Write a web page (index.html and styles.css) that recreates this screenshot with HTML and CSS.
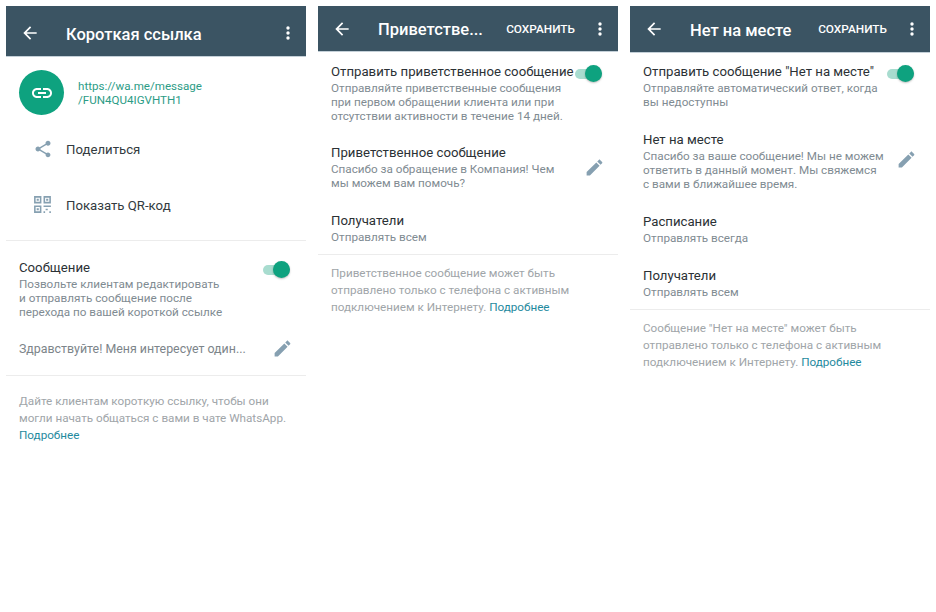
FILE: index.html
```html
<!DOCTYPE html>
<html lang="ru">

<head>
    <meta charset="UTF-8">
    <meta name="viewport" content="width=device-width, initial-scale=1.0">
    <title>Настройки</title>
    <link rel="stylesheet" href="styles.css">
</head>

<body>
    <div class="screens">
        <!-- короткая ссылка -->
        <section class="screen">
            <header class="bar bar-tall">
                <svg class="back" viewBox="0 0 24 24"><path d="M20 11H7.83l5.59-5.59L12 4l-8 8 8 8 1.41-1.41L7.83 13H20v-2z"/></svg>
                <h1 class="bar-title">Короткая ссылка</h1>
                <svg class="more" viewBox="0 0 4 14"><circle cx="2" cy="2" r="1.7"/><circle cx="2" cy="7" r="1.7"/><circle cx="2" cy="12" r="1.7"/></svg>
            </header>
            <div class="link-row">
                <div class="link-circle">
                    <svg viewBox="0 0 24 24"><path d="M3.9 12c0-1.71 1.39-3.1 3.1-3.1h4V7H7c-2.76 0-5 2.24-5 5s2.24 5 5 5h4v-1.9H7c-1.71 0-3.1-1.39-3.1-3.1zM8 13h8v-2H8v2zm9-6h-4v1.9h4c1.71 0 3.1 1.39 3.1 3.1s-1.39 3.1-3.1 3.1h-4V17h4c2.76 0 5-2.24 5-5s-2.24-5-5-5z"/></svg>
                </div>
                <div class="link-text">https://wa.me/message<br>/FUN4QU4IGVHTH1</div>
            </div>
            <div class="action">
                <svg class="action-icon" viewBox="0 0 24 24"><path d="M18 16.08c-.76 0-1.44.3-1.96.77L8.91 12.7c.05-.23.09-.46.09-.7s-.04-.47-.09-.7l7.05-4.11c.54.5 1.25.81 2.04.81 1.66 0 3-1.34 3-3s-1.34-3-3-3-3 1.34-3 3c0 .24.04.47.09.7L8.04 9.81C7.5 9.31 6.79 9 6 9c-1.66 0-3 1.34-3 3s1.34 3 3 3c.79 0 1.5-.31 2.04-.81l7.12 4.16c-.05.21-.08.43-.08.65 0 1.61 1.31 2.92 2.92 2.92 1.61 0 2.92-1.31 2.92-2.92s-1.31-2.92-2.92-2.92z"/></svg>
                <span>Поделиться</span>
            </div>
            <div class="action">
                <svg class="action-icon" viewBox="0 0 19 19"><path fill-rule="evenodd" d="M1 1h7v7H1zM2.500 2.500v4h4v-4zM10 1h7v7h-7zM11.500 2.500v4h4v-4zM1 10h7v7H1zM2.500 11.500v4h4v-4z"/><path d="M3.500 3.500h2v2h-2zM12.500 3.500h2v2h-2zM3.500 12.500h2v2h-2zM10 10h7v1.500h-7zM12 13h2v1.500h-2zM10 15.500h1.500V17H10zM15.500 15.500H17V17h-1.500z"/></svg>
                <span>Показать QR-код</span>
            </div>
            <div class="divider divider-links"></div>
            <div class="row row-message">
                <div class="row-body">
                    <div class="label">Сообщение</div>
                    <div class="sub">Позвольте клиентам редактировать<br>и отправлять сообщение после<br>перехода по вашей короткой ссылке</div>
                </div>
                <div class="toggle"><span class="knob"></span></div>
            </div>
            <div class="row row-draft">
                <div class="draft">Здравствуйте! Меня интересует один...</div>
                <svg class="pencil" viewBox="0 0 24 24"><path d="M3 17.25V21h3.75L17.81 9.94l-3.75-3.75L3 17.25zM20.710 7.040c.39-.39.39-1.020 0-1.410l-2.340-2.340c-.39-.39-1.020-.39-1.410 0l-1.830 1.830 3.750 3.750 1.830-1.830z"/></svg>
            </div>
            <div class="divider"></div>
            <p class="note note-first">Дайте клиентам короткую ссылку, чтобы они<br>могли начать общаться с вами в чате WhatsApp.<br><a class="more-link">Подробнее</a></p>
        </section>

        <!-- приветственное сообщение -->
        <section class="screen">
            <header class="bar">
                <svg class="back" viewBox="0 0 24 24"><path d="M20 11H7.83l5.59-5.59L12 4l-8 8 8 8 1.41-1.41L7.83 13H20v-2z"/></svg>
                <h1 class="bar-title">Приветстве...</h1>
                <span class="save">СОХРАНИТЬ</span>
                <svg class="more" viewBox="0 0 4 14"><circle cx="2" cy="2" r="1.7"/><circle cx="2" cy="7" r="1.7"/><circle cx="2" cy="12" r="1.7"/></svg>
            </header>
            <div class="row row-top">
                <div class="row-body">
                    <div class="label">Отправить приветственное сообщение</div>
                    <div class="sub">Отправляйте приветственные сообщения<br>при первом обращении клиента или при<br>отсутствии активности в течение 14 дней.</div>
                </div>
                <div class="toggle"><span class="knob"></span></div>
            </div>
            <div class="row row-greeting">
                <div class="row-body">
                    <div class="label">Приветственное сообщение</div>
                    <div class="sub">Спасибо за обращение в Компания! Чем<br>мы можем вам помочь?</div>
                </div>
                <svg class="pencil" viewBox="0 0 24 24"><path d="M3 17.25V21h3.75L17.81 9.94l-3.75-3.75L3 17.25zM20.710 7.040c.39-.39.39-1.020 0-1.410l-2.340-2.340c-.39-.39-1.020-.39-1.410 0l-1.830 1.830 3.750 3.750 1.830-1.830z"/></svg>
            </div>
            <div class="row row-last">
                <div class="row-body">
                    <div class="label">Получатели</div>
                    <div class="sub">Отправлять всем</div>
                </div>
            </div>
            <div class="divider"></div>
            <p class="note">Приветственное сообщение может быть<br>отправлено только с телефона с активным<br>подключением к Интернету. <a class="more-link">Подробнее</a></p>
        </section>

        <!-- нет на месте -->
        <section class="screen">
            <header class="bar bar-away">
                <svg class="back" viewBox="0 0 24 24"><path d="M20 11H7.83l5.59-5.59L12 4l-8 8 8 8 1.41-1.41L7.83 13H20v-2z"/></svg>
                <h1 class="bar-title">Нет на месте</h1>
                <span class="save">СОХРАНИТЬ</span>
                <svg class="more" viewBox="0 0 4 14"><circle cx="2" cy="2" r="1.7"/><circle cx="2" cy="7" r="1.7"/><circle cx="2" cy="12" r="1.7"/></svg>
            </header>
            <div class="row row-top">
                <div class="row-body">
                    <div class="label">Отправить сообщение "Нет на месте"</div>
                    <div class="sub">Отправляйте автоматический ответ, когда<br>вы недоступны</div>
                </div>
                <div class="toggle"><span class="knob"></span></div>
            </div>
            <div class="row row-away">
                <div class="row-body">
                    <div class="label">Нет на месте</div>
                    <div class="sub">Спасибо за ваше сообщение! Мы не можем<br>ответить в данный момент. Мы свяжемся<br>с вами в ближайшее время.</div>
                </div>
                <svg class="pencil" viewBox="0 0 24 24"><path d="M3 17.25V21h3.75L17.81 9.94l-3.75-3.75L3 17.25zM20.710 7.040c.39-.39.39-1.020 0-1.410l-2.340-2.340c-.39-.39-1.020-.39-1.410 0l-1.830 1.830 3.750 3.750 1.830-1.830z"/></svg>
            </div>
            <div class="row row-schedule">
                <div class="row-body">
                    <div class="label">Расписание</div>
                    <div class="sub">Отправлять всегда</div>
                </div>
            </div>
            <div class="row row-last">
                <div class="row-body">
                    <div class="label">Получатели</div>
                    <div class="sub">Отправлять всем</div>
                </div>
            </div>
            <div class="divider"></div>
            <p class="note">Сообщение "Нет на месте" может быть<br>отправлено только с телефона с активным<br>подключением к Интернету. <a class="more-link">Подробнее</a></p>
        </section>
    </div>
</body>

</html>
```
FILE: styles.css
```css
* {
    box-sizing: border-box;
}

body {
    margin: 0;
    background: #fff;
    font-family: Roboto, "Liberation Sans", sans-serif;
}

.screens {
    display: flex;
    gap: 12px;
    padding: 6px;
}

.screen {
    width: 300px;
    flex: none;
}

.bar {
    display: flex;
    align-items: center;
    height: 46px;
    padding: 0 16px 0 14px;
    background: #3b5463;
    border-bottom: 1px solid #c4d0d8;
    color: #fff;
}

.bar-tall {
    height: 51px;
    padding-top: 4px;
}

.bar-away {
    height: 47px;
}

.back {
    width: 20px;
    height: 20px;
    flex: none;
    fill: #fff;
}

.bar-title {
    margin: 2px 0 0 26px;
    flex: 1;
    font-size: 16.500px;
    font-weight: 500;
    white-space: nowrap;
}

.save {
    margin-right: 23px;
    font-size: 11.800px;
    font-weight: 500;
}

.more {
    width: 4px;
    height: 14px;
    flex: none;
    fill: #fff;
}

.link-row {
    display: flex;
    align-items: center;
    gap: 14px;
    padding: 13px 13px 6px;
}

.link-circle {
    display: flex;
    align-items: center;
    justify-content: center;
    width: 45px;
    height: 45px;
    border-radius: 50%;
    background: #0ea27f;
}

.link-circle svg {
    width: 24px;
    height: 24px;
    fill: #fff;
}

.link-text {
    font-size: 11.600px;
    line-height: 14px;
    color: #2c9c86;
}

.action {
    display: flex;
    align-items: center;
    gap: 13px;
    height: 56px;
    padding-left: 27px;
    font-size: 13.200px;
    color: #333b40;
}

.action-icon {
    width: 20px;
    height: 20px;
    fill: #86a0b1;
}

.divider {
    height: 1px;
    background: #ececec;
}

.divider-links {
    margin-top: 7px;
}

.row {
    display: flex;
    justify-content: space-between;
    padding: 0 16px 0 13px;
}

.row-body {
    white-space: nowrap;
}

.label {
    font-size: 13.200px;
    line-height: 16px;
    color: #2b3135;
}

.sub {
    margin-top: 0.500px;
    font-size: 11.700px;
    line-height: 14.300px;
    color: #7f8b92;
}

.toggle {
    position: relative;
    width: 27px;
    height: 10px;
    margin-top: 5px;
    border-radius: 5px;
    background: #a8dccf;
    flex: none;
}

.knob {
    position: absolute;
    top: -4px;
    right: 0;
    width: 17px;
    height: 17px;
    border-radius: 50%;
    background: #0ea27f;
    box-shadow: 0 1px 2px rgba(0, 0, 0, .25);
}

.pencil {
    width: 21px;
    height: 21px;
    margin-right: -3px;
    flex: none;
    fill: #86a0b1;
}

.row-message {
    padding-top: 19px;
}

.row-draft {
    align-items: center;
    padding-top: 19px;
    padding-bottom: 16px;
}

.draft {
    font-size: 12.400px;
    line-height: 16px;
    white-space: nowrap;
    color: #7d858a;
}

.row-top {
    padding-top: 12px;
}

.bar-away + .row-top {
    padding-top: 11px;
}

.row-greeting {
    align-items: center;
    padding-top: 22px;
}

.row-last {
    padding-top: 23px;
    padding-bottom: 10px;
}

.row-away {
    align-items: center;
    padding-top: 23px;
}

.row-away .pencil {
    margin-bottom: 5px;
}

.row-schedule {
    padding-top: 23px;
}

.note {
    margin: 0;
    padding: 9.500px 13px 0;
    font-size: 11.700px;
    line-height: 17px;
    color: #a0a5a9;
    white-space: nowrap;
}

.note-first {
    padding-top: 17px;
}

.more-link {
    color: #1f8a9e;
}
```
